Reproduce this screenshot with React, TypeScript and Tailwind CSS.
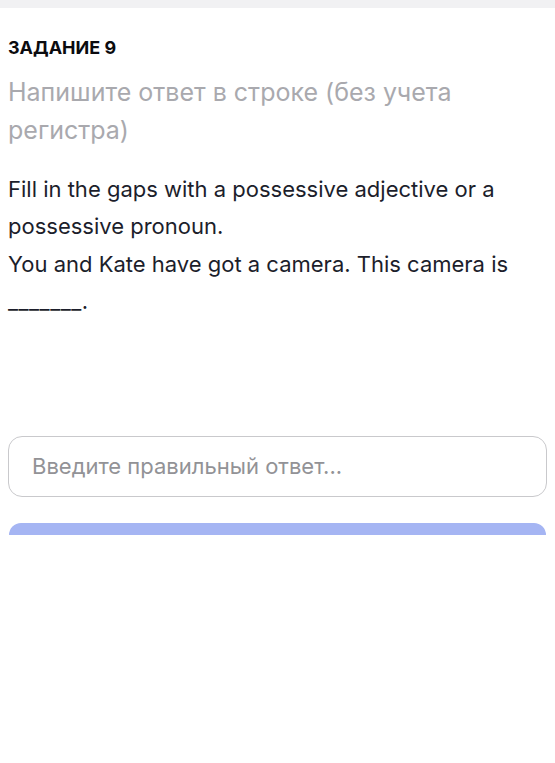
import React from 'react'

const App = () => {
  return (
    <div className="w-[555px] h-[763px] bg-white overflow-hidden font-['Inter',sans-serif]">
      <div className="h-2 bg-[#f1f1f3]" />
      <div className="px-2 pt-[28px]">
        <p className="text-[18px] font-bold text-[#0b0b0f] leading-[24px]">ЗАДАНИЕ 9</p>
        <p className="mt-[13px] text-[25px] leading-[38px] text-[#a9a9ae]">
          Напишите ответ в строке (без учета регистра)
        </p>
        <div className="mt-[22px] text-[22px] leading-[37.3px] text-[#1c1e2b]">
          <p>Fill in the gaps with a possessive adjective or a possessive pronoun.</p>
          <p>
            You and Kate have got a camera. This camera is{' '}
            <span className="tracking-[0.5px]">_______.</span>
          </p>
        </div>
        <div className="mt-[116px] h-[61px] rounded-[14px] border border-[#c9c9cc] flex items-center px-[23px]">
          <input
            type="text"
            placeholder="Введите правильный ответ..."
            className="w-full outline-none text-[22px] text-[#333] placeholder:text-[#929296]"
          />
        </div>
        <div className="mt-[26px] mx-px h-[12px] rounded-t-[20px] bg-[#a5b5f3]" />
      </div>
    </div>
  )
}

export default App
